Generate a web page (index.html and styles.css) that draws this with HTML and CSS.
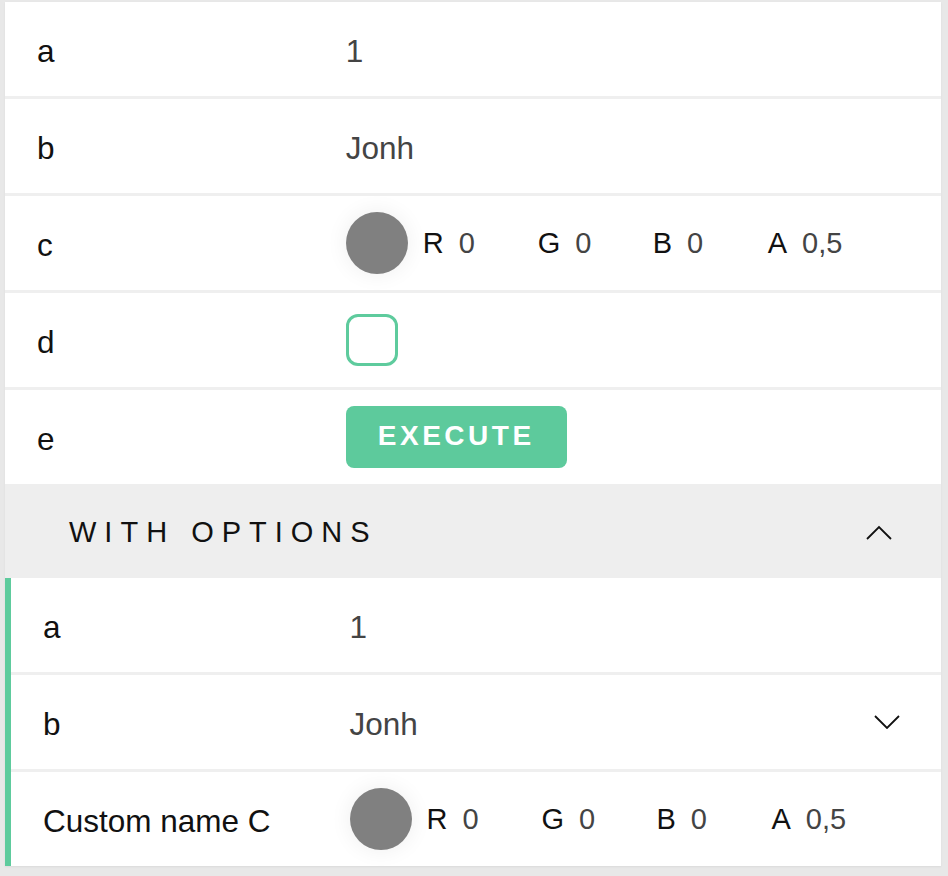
FILE: index.html
```html
<!DOCTYPE html>
<html>
<head>
<meta charset="utf-8">
<link rel="stylesheet" href="styles.css">
</head>
<body>
<div class="panel">
  <div class="row">
    <div class="label">a</div>
    <div class="value text">1</div>
  </div>
  <div class="row">
    <div class="label">b</div>
    <div class="value text">Jonh</div>
  </div>
  <div class="row">
    <div class="label">c</div>
    <div class="value color-field">
      <span class="swatch"></span>
      <span class="channel"><span class="ch-label">R</span><span class="ch-value">0</span></span>
      <span class="channel"><span class="ch-label">G</span><span class="ch-value">0</span></span>
      <span class="channel"><span class="ch-label">B</span><span class="ch-value">0</span></span>
      <span class="channel"><span class="ch-label">A</span><span class="ch-value">0,5</span></span>
    </div>
  </div>
  <div class="row">
    <div class="label">d</div>
    <div class="value"><span class="checkbox"></span></div>
  </div>
  <div class="row row-last">
    <div class="label">e</div>
    <div class="value"><button class="execute">EXECUTE</button></div>
  </div>
  <div class="group">
    <div class="group-header">
      <span class="group-title">WITH OPTIONS</span>
      <svg class="chevron-up" width="26" height="15" viewBox="0 0 26 15"><polyline points="1,14 13,2 25,14" fill="none" stroke="#111" stroke-width="1.8"/></svg>
    </div>
    <div class="group-body">
      <div class="row">
        <div class="label">a</div>
        <div class="value text">1</div>
      </div>
      <div class="row">
        <div class="label">b</div>
        <div class="value select">
          <span class="text">Jonh</span>
          <svg class="chevron-down" width="26" height="14" viewBox="0 0 26 14"><polyline points="1,1 13,13 25,1" fill="none" stroke="#111" stroke-width="1.8"/></svg>
        </div>
      </div>
      <div class="row row-last">
        <div class="label">Custom name C</div>
        <div class="value color-field">
          <span class="swatch"></span>
          <span class="channel"><span class="ch-label">R</span><span class="ch-value">0</span></span>
          <span class="channel"><span class="ch-label">G</span><span class="ch-value">0</span></span>
          <span class="channel"><span class="ch-label">B</span><span class="ch-value">0</span></span>
          <span class="channel"><span class="ch-label">A</span><span class="ch-value">0,5</span></span>
        </div>
      </div>
    </div>
  </div>
</div>
</body>
</html>
```
FILE: styles.css
```css
html, body {
  margin: 0;
  padding: 0;
}
body {
  background: #e8e8e8;
  height: 876px;
  overflow: hidden;
  font-family: "Liberation Sans", Arial, sans-serif;
}
.panel {
  margin: 2px 7px 0 5px;
  height: 864px;
  background: #fff;
  box-shadow: 0 1px 2px rgba(0, 0, 0, 0.06);
}
.row {
  display: grid;
  grid-template-columns: 36.4% 1fr;
  align-items: center;
  height: 94px;
  border-bottom: 3px solid #efefef;
}
.row-last {
  border-bottom: none;
}
.label {
  padding-left: 32px;
  padding-top: 5px;
  font-size: 31.5px;
  color: #111;
}
.value {
  font-size: 31.5px;
  color: #444;
}
.text {
  padding-top: 5px;
}
.color-field {
  display: flex;
  align-items: center;
}
.swatch {
  width: 62px;
  height: 62px;
  border-radius: 50%;
  background: #808080;
  box-shadow: 0 0 22px rgba(0, 0, 0, 0.07);
  margin-right: 15px;
}
.channel {
  width: 115px;
  font-size: 29px;
  display: flex;
  align-items: baseline;
}
.ch-label {
  color: #111;
}
.ch-value {
  color: #444;
  margin-left: 15px;
}
.checkbox {
  display: block;
  width: 46px;
  height: 46px;
  border: 3px solid #5ecb9d;
  border-radius: 12px;
}
.execute {
  display: block;
  width: 221px;
  height: 62px;
  border: none;
  border-radius: 8px;
  background: #5dca9c;
  color: #fff;
  font-family: "Liberation Sans", Arial, sans-serif;
  font-weight: bold;
  font-size: 28px;
  letter-spacing: 3.5px;
  padding: 0 0 2px 0;
}
.group-header {
  height: 94px;
  background: #eeeeee;
  display: flex;
  align-items: center;
  justify-content: space-between;
  padding: 0 49px 0 64px;
}
.group-title {
  font-size: 29px;
  letter-spacing: 8px;
  color: #111;
  margin-top: 2px;
}
.chevron-up {
  display: block;
  margin-top: 2px;
}
.group-body {
  border-left: 6px solid #5ecb9d;
}
.select {
  display: flex;
  align-items: center;
  justify-content: space-between;
  padding-right: 41px;
}
.select .text {
  padding-top: 5px;
}
.chevron-down {
  display: block;
}
```
